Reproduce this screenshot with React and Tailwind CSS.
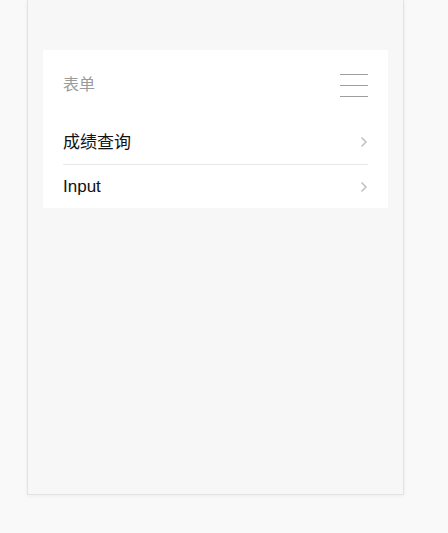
import React from "react";

function Chevron() {
  return (
    <svg width="8" height="12" viewBox="0 0 8 12" className="shrink-0">
      <path d="M1.5 1.5 L6 6 L1.5 10.5" fill="none" stroke="#c2c2c2" strokeWidth="1.6" />
    </svg>
  );
}

function Row({ label, last }) {
  return (
    <div className={"flex items-center justify-between " + (last ? "h-[43px]" : "h-[45px] border-b border-[#e8e8e8]")}>
      <span className="text-[17px] text-[#111] leading-none">{label}</span>
      <Chevron />
    </div>
  );
}

export default function App() {
  return (
    <div
      className="min-h-[533px] w-[448px] bg-[#f9f9f9] overflow-hidden"
      style={{ fontFamily: '"Liberation Sans", "Noto Sans CJK SC", sans-serif' }}
    >
      <div className="ml-[27px] w-[377px] h-[495px] bg-[#f7f7f7] border border-t-0 border-[#e3e3e3] shadow-[0_1px_4px_rgba(0,0,0,0.06)] px-[15px] pt-[50px]">
        <div className="bg-white">
          <div className="flex items-start justify-between h-[70px] pt-[23px] px-[20px]">
            <span className="text-[16px] text-[#9a9a9a] leading-[24px]">表单</span>
            <div className="flex flex-col gap-[10px] w-[28px] mt-[1px]">
              <div className="h-[1px] bg-[#9e9e9e]" />
              <div className="h-[1px] bg-[#9e9e9e]" />
              <div className="h-[1px] bg-[#9e9e9e]" />
            </div>
          </div>
          <div className="px-[20px]">
            <Row label="成绩查询" />
            <Row label="Input" last />
          </div>
        </div>
      </div>
    </div>
  );
}
